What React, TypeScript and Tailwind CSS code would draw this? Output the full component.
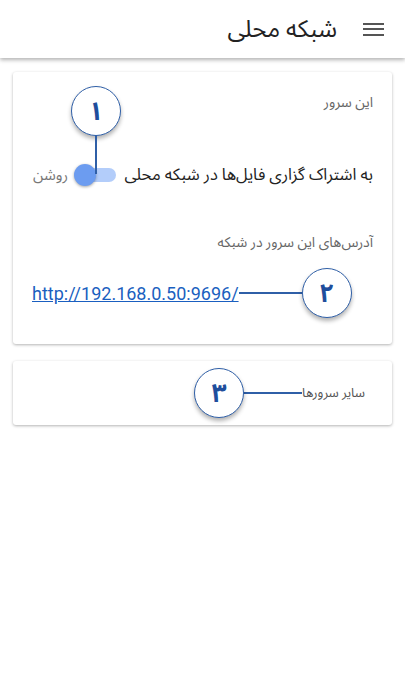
const fa = { fontFamily: '"Roboto", "Noto Sans Arabic", "DejaVu Sans", sans-serif' };

const Badge = ({ n }: { n: string }) => (
  <div className="flex h-[50px] w-[50px] shrink-0 items-center justify-center rounded-full border-[1.5px] border-[#2f5fa7] bg-white shadow-[0_3px_4px_rgba(0,0,0,0.3)]">
    <span className="text-[26px] font-bold leading-none text-[#1f4e9c]">{n}</span>
  </div>
);

const Toggle = () => (
  <div className="relative h-[14px] w-[40px] rounded-full bg-[#b3cdfa]">
    <div className="absolute left-[-2px] top-[-4px] h-[22px] w-[22px] rounded-full bg-[#6c9cf0] shadow-[0_1px_3px_rgba(0,0,0,0.35)]" />
  </div>
);

const App = () => {
  return (
    <div dir="rtl" style={fa} className="min-h-[690px] w-[405px] bg-white">
      <header className="flex h-[58px] items-center gap-[26px] bg-white pr-[21px] shadow-[0_2px_4px_rgba(0,0,0,0.3)]">
        <div className="flex w-[21px] flex-col gap-[3.5px]">
          <span className="h-[2px] w-full bg-[#555]" />
          <span className="h-[2px] w-full bg-[#555]" />
          <span className="h-[2px] w-full bg-[#555]" />
        </div>
        <h1 className="text-[24px] leading-none text-[#222]">شبکه محلی</h1>
      </header>

      <main className="flex flex-col gap-[17px] px-[13px] pt-[14px]">
        <section className="relative rounded-[3px] bg-white px-[19px] pb-[26px] pt-[20px] shadow-[0_1px_3px_rgba(0,0,0,0.3)]">
          <p className="text-[14px] leading-5 text-[#666]">این سرور</p>

          <div className="mt-[51px] flex h-6 items-center justify-between">
            <span className="text-[16.5px] text-[#222]">به اشتراک گزاری فایل‌ها در شبکه محلی</span>
            <div className="flex items-center gap-[8px]">
              <Toggle />
              <span className="pl-[1px] text-[15px] text-[#777]">روشن</span>
            </div>
          </div>

          <p className="mt-[45px] text-[14px] leading-5 text-[#666]">آدرس‌های این سرور در شبکه</p>

          <div dir="ltr" className="mt-[16px] flex items-center">
            <a href="#" className="text-[18px] text-[#1a5fc0] underline">
              http://192.168.0.50:9696/
            </a>
            <span className="h-[1.5px] w-[63px] bg-[#2f5fa7]" />
            <Badge n="۲" />
          </div>

          {/* callout 1 over the switch */}
          <div className="absolute left-[58px] top-[14px]">
            <Badge n="۱" />
          </div>
          <span className="absolute left-[82px] top-[63px] h-[39px] w-[1.5px] bg-[#2f5fa7]" />
        </section>

        <section className="flex h-[64px] items-center rounded-[3px] bg-white pr-[27px] shadow-[0_1px_3px_rgba(0,0,0,0.3)]">
          <span className="text-[13px] text-[#555]">سایر سرورها</span>
          <span className="h-[1.5px] w-[58px] bg-[#2f5fa7]" />
          <Badge n="۳" />
        </section>
      </main>
    </div>
  );
};

export default App;
